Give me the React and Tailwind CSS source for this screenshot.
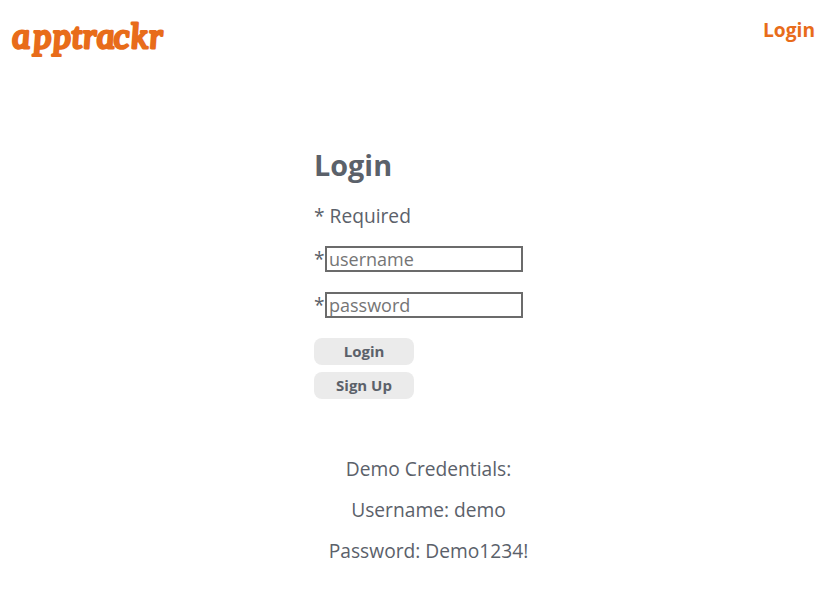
import React from "react";

function Field({ name, type }) {
  return (
    <label className="flex h-[26px] items-start">
      <span className="w-[11px] leading-[26px]">*</span>
      <input
        type={type}
        placeholder={name}
        className="h-[26px] w-[198px] border-2 border-[#6b6b6b] bg-white px-[2px] text-[18px] leading-[22px] placeholder:text-[#757575]"
      />
    </label>
  );
}

function Button({ children }) {
  return (
    <button className="h-[27px] w-[100px] rounded-lg bg-[#ebebeb] text-[15px] font-bold leading-[27px]">
      {children}
    </button>
  );
}

export default function App() {
  return (
    <div className="flex h-[599px] flex-col overflow-hidden bg-white font-['Open_Sans',sans-serif] text-[19.2px] text-[#5b616a]">
      <header className="flex h-[75px] items-start justify-between pr-[23px] text-[#e86c1a]">
        <svg width="180" height="70" aria-label="apptrackr">
          <text
            transform="translate(0.5 48.3) skewX(6)"
            x="12.5 33.7 53.3 72 83.2 97 114 131.3 149.5"
            y="0"
            fill="#e86c1a"
            stroke="#e86c1a"
            strokeWidth="2.9"
            strokeLinejoin="round"
            fontFamily="Liberation Serif, serif"
            fontSize="36"
            fontStyle="italic"
          >
            apptrackr
          </text>
        </svg>
        <a href="#" className="mt-[17px] font-bold leading-[26px]">Login</a>
      </header>
      <main className="ml-[314px] w-[229px]">
        <h1 className="mt-[70px] text-[28.8px] font-bold leading-[40px]">Login</h1>
        <p className="mt-[18px] leading-[26px]">* Required</p>
        <form className="mt-[17px] flex flex-col gap-5">
          <Field name="username" type="text" />
          <Field name="password" type="password" />
          <div className="flex flex-col gap-[7px]">
            <Button>Login</Button>
            <Button>Sign Up</Button>
          </div>
        </form>
        <div className="mt-[57px] flex flex-col gap-[15px] text-center leading-[26px]">
          <p>Demo Credentials:</p>
          <p>Username: demo</p>
          <p>Password: Demo1234!</p>
        </div>
      </main>
    </div>
  );
}
